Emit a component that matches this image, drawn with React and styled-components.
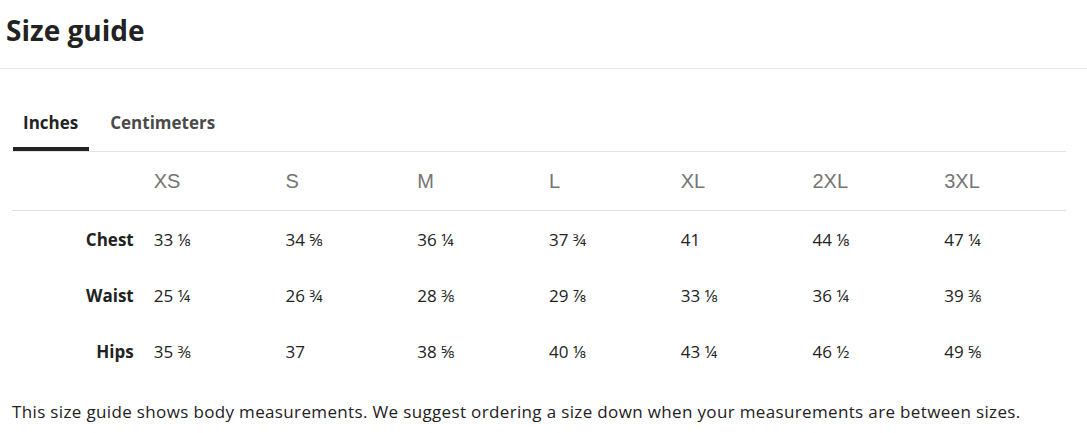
import { useState } from 'react'
import styled, { createGlobalStyle } from 'styled-components'

const GlobalStyle = createGlobalStyle`
  body {
    margin: 0;
    background: #fff;
    font-family: 'Open Sans', 'Liberation Sans', sans-serif;
    color: #222;
  }
`

const Page = styled.div`
  width: 1087px;
`

const Header = styled.header`
  padding: 11px 6px 0;
  height: 57px;
  border-bottom: 1px solid #e6e6e6;
`

const Title = styled.h1`
  margin: 0;
  font-size: 28px;
  font-weight: 700;
  line-height: 38px;
  color: #222;
`

const Body = styled.div`
  padding: 42px 21px 0 12px;
`

const Tabs = styled.div`
  display: flex;
  gap: 11px;
  padding-left: 1px;
  border-bottom: 1px solid #e3e3e3;
`

const Tab = styled.button`
  border: none;
  background: none;
  padding: 0 11px 16px 10px;
  font-family: inherit;
  font-size: 17px;
  font-weight: 700;
  line-height: 24px;
  cursor: pointer;
  color: ${(p) => (p.$active ? '#222' : '#4a4a4a')};
  box-shadow: ${(p) => (p.$active ? 'inset 0 -4px 0 #222' : 'none')};
`

const Row = styled.div`
  display: grid;
  grid-template-columns: repeat(8, 1fr);
  align-items: center;
  height: ${(p) => (p.$head ? '58px' : '56px')};
  border-bottom: ${(p) => (p.$head ? '1px solid #e0e0e0' : 'none')};
`

const SizeCell = styled.div`
  padding: 0 10px;
  font-family: 'Liberation Sans', Arial, sans-serif;
  font-size: 20px;
  color: #757575;
`

const Label = styled.div`
  padding: 0 10px;
  text-align: right;
  font-size: 17px;
  font-weight: 700;
  color: #222;
`

const Value = styled.div`
  padding: 0 10px;
  font-size: 17px;
  color: #222;
`

const Note = styled.p`
  margin: 21px 0 0;
  font-size: 17px;
  letter-spacing: 0.35px;
  color: #222;
  white-space: nowrap;
`

const sizes = ['XS', 'S', 'M', 'L', 'XL', '2XL', '3XL']

const data = {
  Inches: [
    ['Chest', ['33 ⅛', '34 ⅝', '36 ¼', '37 ¾', '41', '44 ⅛', '47 ¼']],
    ['Waist', ['25 ¼', '26 ¾', '28 ⅜', '29 ⅞', '33 ⅛', '36 ¼', '39 ⅜']],
    ['Hips', ['35 ⅜', '37', '38 ⅝', '40 ⅛', '43 ¼', '46 ½', '49 ⅝']],
  ],
  Centimeters: [
    ['Chest', ['84', '88', '92', '96', '104', '112', '120']],
    ['Waist', ['64', '68', '72', '76', '84', '92', '100']],
    ['Hips', ['90', '94', '98', '102', '110', '118', '126']],
  ],
}

function App() {
  const [unit, setUnit] = useState('Inches')

  return (
    <Page>
      <GlobalStyle />
      <Header>
        <Title>Size guide</Title>
      </Header>
      <Body>
        <Tabs>
          {Object.keys(data).map((u) => (
            <Tab key={u} $active={u === unit} onClick={() => setUnit(u)}>
              {u}
            </Tab>
          ))}
        </Tabs>
        <Row $head>
          <div />
          {sizes.map((s) => (
            <SizeCell key={s}>{s}</SizeCell>
          ))}
        </Row>
        {data[unit].map(([label, values]) => (
          <Row key={label}>
            <Label>{label}</Label>
            {values.map((v, i) => (
              <Value key={i}>{v}</Value>
            ))}
          </Row>
        ))}
        <Note>
          This size guide shows body measurements. We suggest ordering a size down when your
          measurements are between sizes.
        </Note>
      </Body>
    </Page>
  )
}

export default App
